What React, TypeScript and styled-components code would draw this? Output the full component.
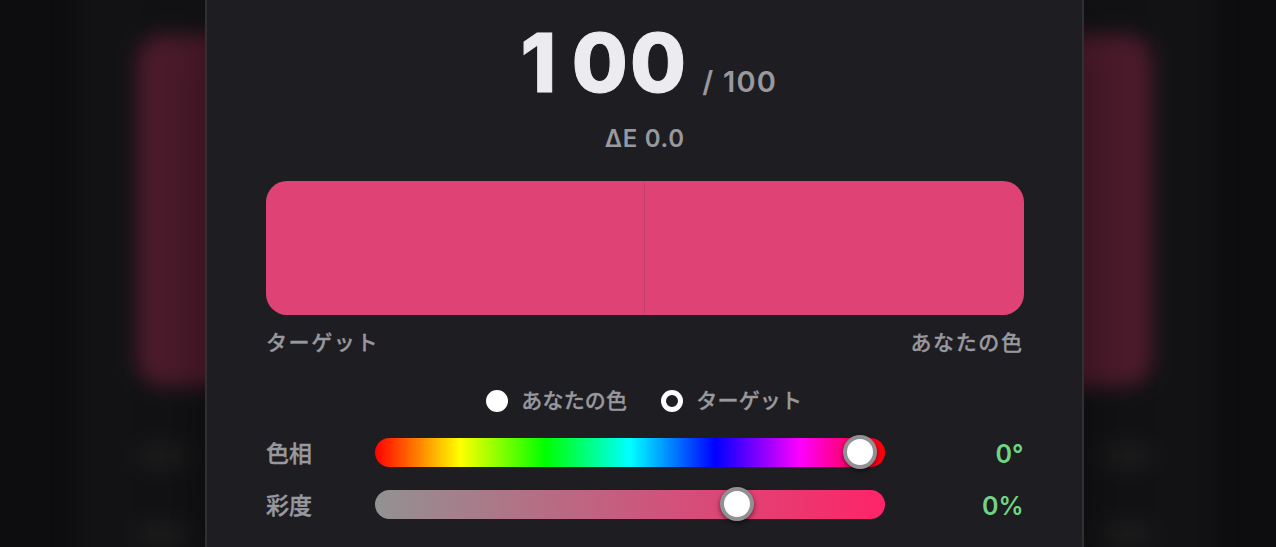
import React from "react";
import styled, { createGlobalStyle } from "styled-components";

const GlobalStyle = createGlobalStyle`
  *, *::before, *::after { box-sizing: border-box; }
  body {
    margin: 0;
    background: #0d0d0f;
    color: #ebebf0;
    font-family: Inter, "Noto Sans CJK JP", sans-serif;
    overflow: hidden;
  }
`;

const Stage = styled.div`
  position: relative;
  height: 547px;
  overflow: hidden;
  display: flex;
`;

const Backdrop = styled.div`
  position: absolute;
  inset: 0;
`;

const GameCard = styled.div`
  position: absolute;
  left: 73px;
  top: -80px;
  width: 1143px;
  height: 720px;
  padding: 115px 64px 0;
  background: #121214;
  filter: blur(10px);
`;

const GameSwatch = styled.div`
  height: 351px;
  border-radius: 26px;
  background: #4d1b2c;
`;

const GameRow = styled.div<{ $top: number }>`
  display: flex;
  justify-content: space-between;
  margin-top: ${(p) => p.$top}px;
  &::before, &::after {
    content: "";
    width: 50px;
    height: 24px;
    border-radius: 8px;
    background: #1c1c1d;
  }
`;

const Dialog = styled.main`
  position: relative;
  width: 879px;
  height: 547px;
  margin-left: 205px;
  padding: 0 58.5px 0 59px;
  background: #1e1d21;
  border: solid #303033;
  border-width: 0 2px;
  box-shadow: 0 20px 60px rgba(0, 0, 0, 0.4);
  display: flex;
  flex-direction: column;
`;

const ScoreLine = styled.div`
  display: flex;
  justify-content: center;
  align-items: baseline;
  height: 121px;
  padding: 12px 0 0 8px;
  line-height: 102px;
`;

const Score = styled.span`
  font-size: 81px;
  font-weight: 800;
  letter-spacing: 2.2px;
  -webkit-text-stroke: 1px currentColor;
`;

const LeadDigit = styled.span`
  letter-spacing: 15.5px;
`;

const Total = styled.span`
  margin-left: 14px;
  font-size: 29px;
  font-weight: 600;
  line-height: 34px;
  letter-spacing: 1.2px;
  color: #98989f;
`;

const Delta = styled.div`
  height: 60px;
  text-align: center;
  font-size: 24px;
  font-weight: 600;
  line-height: 35px;
  letter-spacing: 0.7px;
  color: #98989f;
`;

const Compare = styled.div`
  display: flex;
  height: 134px;
  border-radius: 21px;
  overflow: hidden;
`;

const Half = styled.div`
  flex: 1;
  background: #df4375;
  & + & { border-left: 1px solid #c73f6c; }
`;

const Captions = styled.div`
  display: flex;
  justify-content: space-between;
  height: 70px;
  padding-top: 13px;
  font-size: 21px;
  font-weight: 500;
  line-height: 30px;
  letter-spacing: 1.6px;
  color: #98989f;
  -webkit-text-stroke: 0.3px currentColor;
`;

const Legend = styled.div`
  display: flex;
  justify-content: center;
  gap: 34px;
  height: 33px;
  padding-right: 1px;
`;

const LegendItem = styled.div`
  display: flex;
  align-items: center;
  gap: 13px;
  font-size: 21px;
  font-weight: 500;
  line-height: 34px;
  height: 32px;
  letter-spacing: 0.2px;
  color: #98989f;
  -webkit-text-stroke: 0.3px currentColor;
`;

const Marker = styled.i<{ $hollow?: boolean }>`
  width: 22px;
  height: 22px;
  border-radius: 50%;
  border: 5px solid #fff;
  background: ${(p) => (p.$hollow ? "transparent" : "#fff")};
`;

const Sliders = styled.div`
  display: flex;
  flex-direction: column;
  gap: 22px;
  padding-top: 19px;
`;

const SliderRow = styled.div`
  display: grid;
  grid-template-columns: 109px 510px 1fr;
  grid-template-rows: 30px;
  align-items: center;
  height: 30px;
`;

const SliderName = styled.span`
  padding-top: 3px;
  font-size: 23px;
  font-weight: 500;
  line-height: 30px;
  color: #98989f;
  -webkit-text-stroke: 0.4px currentColor;
`;

const Track = styled.div<{ $fill: string }>`
  position: relative;
  height: 29px;
  border-radius: 15px;
  background: ${(p) => p.$fill};
`;

const Thumb = styled.div<{ $at: number }>`
  position: absolute;
  top: -3px;
  left: ${(p) => p.$at}px;
  width: 34px;
  height: 34px;
  border-radius: 50%;
  border: 4px solid #919193;
  background: #fff;
  box-shadow: 0 2px 5px rgba(0, 0, 0, 0.55);
`;

const Value = styled.span`
  padding-top: 3px;
  text-align: right;
  font-size: 25px;
  font-weight: 600;
  line-height: 30px;
  color: #6fd585;
`;

const hueFill = "linear-gradient(90deg, #f00, #ff0 16.67%, #0f0 33.33%, #0ff 50%, #00f 66.67%, #f0f 83.33%, #f00)";
const saturationFill = "linear-gradient(90deg, #929292, #ff2369)";

const channels = [
  { name: "色相", fill: hueFill, at: 468, value: "0°" },
  { name: "彩度", fill: saturationFill, at: 345, value: "0%" },
];

export default function App() {
  return (
    <Stage>
      <GlobalStyle />
      <Backdrop>
        <GameCard>
          <GameSwatch />
          <GameRow $top={58} />
          <GameRow $top={54} />
        </GameCard>
      </Backdrop>
      <Dialog>
        <ScoreLine>
          <Score><LeadDigit>1</LeadDigit>00</Score>
          <Total>/ 100</Total>
        </ScoreLine>
        <Delta>ΔE 0.0</Delta>
        <Compare>
          <Half />
          <Half />
        </Compare>
        <Captions>
          <span>ターゲット</span>
          <span>あなたの色</span>
        </Captions>
        <Legend>
          <LegendItem><Marker />あなたの色</LegendItem>
          <LegendItem><Marker $hollow />ターゲット</LegendItem>
        </Legend>
        <Sliders>
          {channels.map((c) => (
            <SliderRow key={c.name}>
              <SliderName>{c.name}</SliderName>
              <Track $fill={c.fill}><Thumb $at={c.at} /></Track>
              <Value>{c.value}</Value>
            </SliderRow>
          ))}
        </Sliders>
      </Dialog>
    </Stage>
  );
}
